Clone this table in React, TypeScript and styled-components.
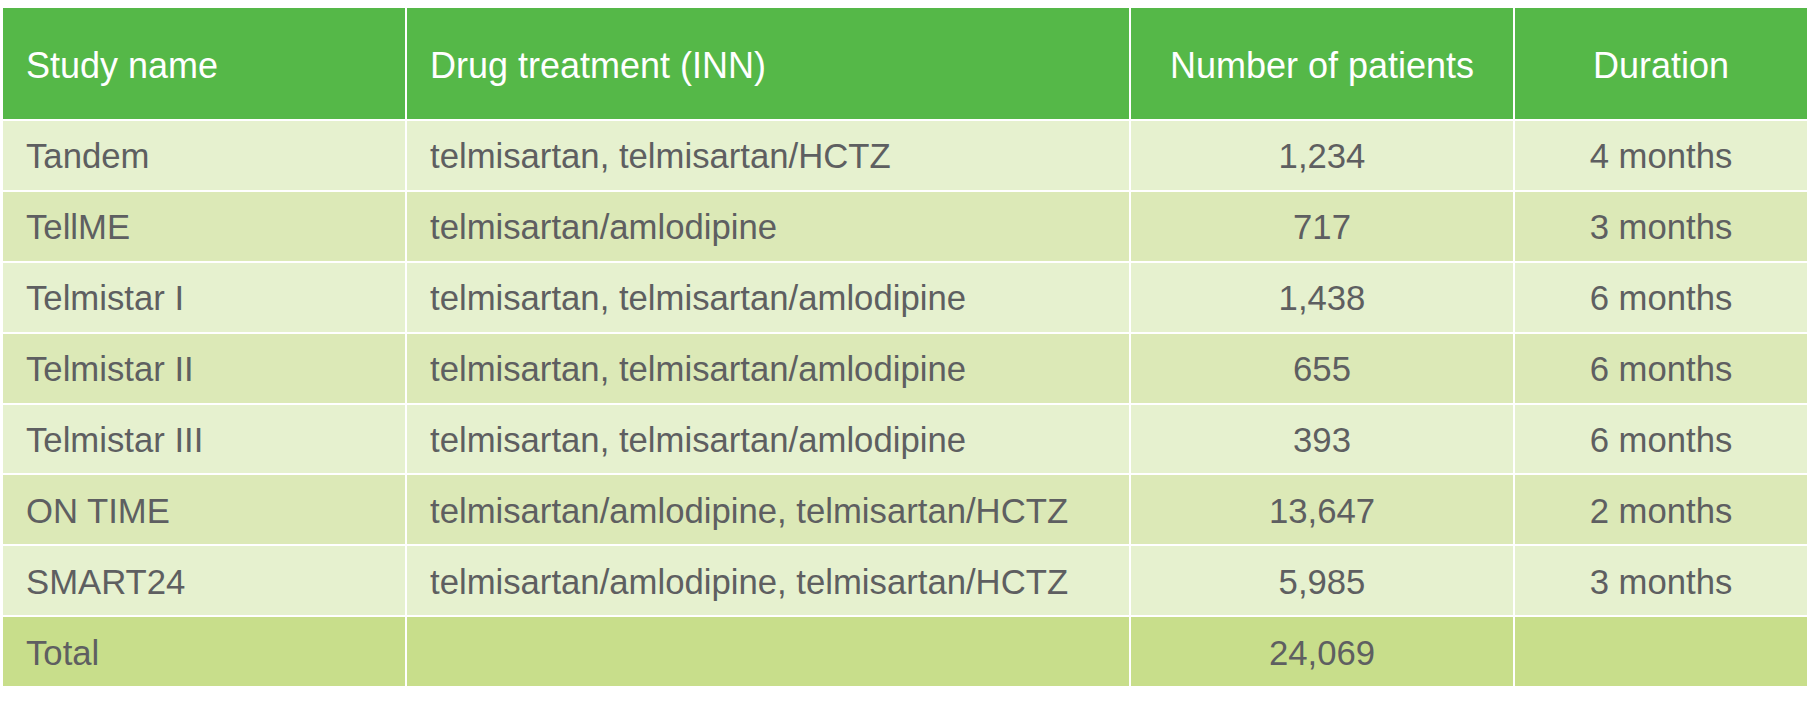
import React from "react";
import styled, { createGlobalStyle } from "styled-components";

const Global = createGlobalStyle`
  html, body { margin: 0; padding: 0; background: #ffffff; }
  body { font-family: "Liberation Sans", Arial, Helvetica, sans-serif; }
`;

const Page = styled.div`
  padding: 8px 0 0 3px;
`;

const Table = styled.div`
  display: grid;
  width: 1804px;
  height: 678px;
  grid-template-columns: 402px 722px 382px 292px;
  grid-template-rows: 111px repeat(8, 1fr);
  gap: 2px;
  background: #ffffff;
`;

type Align = "left" | "center";
type Tone = "odd" | "even" | "total";

const tones: Record<Tone, string> = {
  odd: "#e6f1cf",
  even: "#dce9b7",
  total: "#c8de8b",
};

const HeadCell = styled.div<{ $align: Align }>`
  display: flex;
  align-items: center;
  justify-content: ${(p) => (p.$align === "center" ? "center" : "flex-start")};
  padding: ${(p) => (p.$align === "center" ? "4px 0 0 0" : "4px 0 0 23px")};
  background: #55b848;
  color: #ffffff;
  font-size: 36px;
  white-space: nowrap;
`;

const Cell = styled.div<{ $align: Align; $tone: Tone }>`
  display: flex;
  align-items: center;
  justify-content: ${(p) => (p.$align === "center" ? "center" : "flex-start")};
  padding: ${(p) => (p.$align === "center" ? "3px 0 0 0" : "3px 0 0 23px")};
  background: ${(p) => tones[p.$tone]};
  color: #5e5f61;
  font-size: 34.7px;
  white-space: nowrap;
`;

const headers: { label: string; align: Align }[] = [
  { label: "Study name", align: "left" },
  { label: "Drug treatment (INN)", align: "left" },
  { label: "Number of patients", align: "center" },
  { label: "Duration", align: "center" },
];

const rows: string[][] = [
  ["Tandem", "telmisartan, telmisartan/HCTZ", "1,234", "4 months"],
  ["TellME", "telmisartan/amlodipine", "717", "3 months"],
  ["Telmistar I", "telmisartan, telmisartan/amlodipine", "1,438", "6 months"],
  ["Telmistar II", "telmisartan, telmisartan/amlodipine", "655", "6 months"],
  ["Telmistar III", "telmisartan, telmisartan/amlodipine", "393", "6 months"],
  ["ON TIME", "telmisartan/amlodipine, telmisartan/HCTZ", "13,647", "2 months"],
  ["SMART24", "telmisartan/amlodipine, telmisartan/HCTZ", "5,985", "3 months"],
];

const total = ["Total", "", "24,069", ""];

export default function App() {
  return (
    <>
      <Global />
      <Page>
        <Table>
          {headers.map((h) => (
            <HeadCell key={h.label} $align={h.align}>
              {h.label}
            </HeadCell>
          ))}
          {rows.map((r, i) =>
            r.map((v, j) => (
              <Cell
                key={`${i}-${j}`}
                $align={headers[j].align}
                $tone={i % 2 === 0 ? "odd" : "even"}
              >
                {v}
              </Cell>
            ))
          )}
          {total.map((v, j) => (
            <Cell key={`t-${j}`} $align={headers[j].align} $tone="total">
              {v}
            </Cell>
          ))}
        </Table>
      </Page>
    </>
  );
}
